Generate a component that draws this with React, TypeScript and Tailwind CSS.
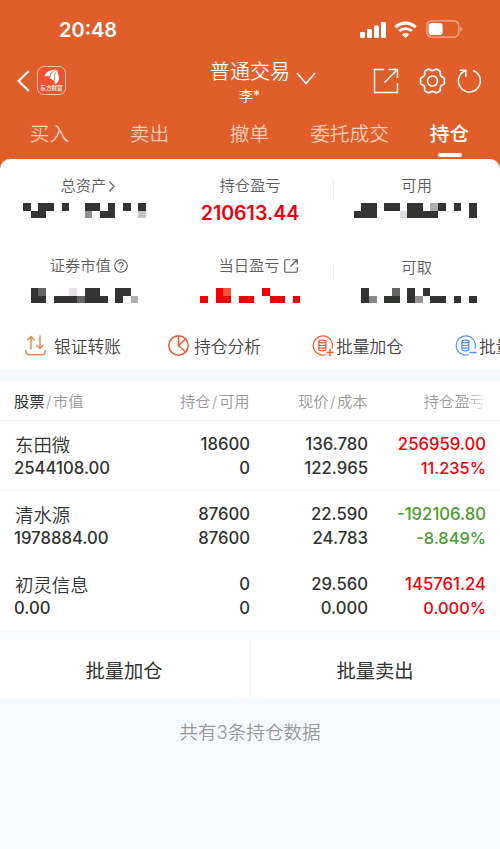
import type { ReactNode } from "react";

const K = "#313431";
const R = "#f2000a";

type Cell = [col: number, row: number, color: string, span?: number];

// Censored amounts: the page is 65 mosaic columns wide, each panel shows a third of them.
function Mosaic({ panel, cells }: { panel: number; cells: Cell[] }) {
  return (
    <svg className="block h-[15.4px] w-full" viewBox={`${(panel * 65) / 3} 0 ${65 / 3} 2`} preserveAspectRatio="none" shapeRendering="crispEdges">
      {cells.map(([c, r, fill, span = 1]) => (
        <rect key={`${c}-${r}`} x={c} y={r} width={span} height={1} fill={fill} />
      ))}
    </svg>
  );
}

const totalAssets: Cell[] = [
  [3, 0, K], [5, 0, K, 2], [8, 0, K], [11, 0, K, 2], [14, 0, K], [16, 0, K], [18, 0, K],
  [4, 1, K, 2], [11, 1, "#918f92"], [13, 1, K, 2], [18, 1, "#c5c5c5"],
];
const available: Cell[] = [
  [47, 0, K, 2], [50, 0, K, 2], [53, 0, K, 2], [56, 0, "#aeacb0"], [57, 0, K], [59, 0, K], [61, 0, K],
  [46, 1, K, 3], [52, 1, "#dddbe0"], [53, 1, K, 4], [61, 1, K],
];
const marketValue: Cell[] = [
  [4, 0, K], [5, 0, "#656266"], [9, 0, "#e6e2e7"], [11, 0, K, 2], [15, 0, K, 2],
  [4, 1, K, 2], [7, 1, K, 3], [10, 1, "#656266"], [11, 1, K, 3], [15, 1, K], [17, 1, "#b0aeb1"],
];
const todayProfit: Cell[] = [
  [28, 0, R], [29, 0, "#f25535"], [34, 0, R],
  [26, 1, R], [28, 1, R, 2], [31, 1, R, 2], [35, 1, R, 2], [38, 1, R],
];
const withdrawable: Cell[] = [
  [47, 0, K], [51, 0, "#656266"], [53, 0, K], [55, 0, K],
  [47, 1, K], [48, 1, "#888886"], [50, 1, K, 2], [53, 1, K], [54, 1, "#959195"], [56, 1, K, 2], [59, 1, K], [61, 1, K],
];

function StatusBar() {
  return (
    <div className="flex h-[60px] items-center justify-between pr-[37px] pl-[59px] text-white">
      <span className="text-[20px] leading-[60px] font-semibold">20:48</span>
      <div className="flex items-center pb-[2px]">
        <svg width="26" height="17" viewBox="0 0 26 17" fill="currentColor">
          <rect x="0" y="11" width="5" height="6" rx="1.2" />
          <rect x="7" y="8" width="5" height="9" rx="1.2" />
          <rect x="14" y="4.5" width="5" height="12.5" rx="1.2" />
          <rect x="21" y="1" width="5" height="16" rx="1.2" />
        </svg>
        <svg className="ml-[8px]" width="23" height="17" viewBox="0 0 23 17" fill="none" stroke="currentColor">
          <path d="M1.4 6.3a14.3 14.3 0 0 1 20.2 0" strokeWidth="3.1" />
          <path d="M5.2 10.1a9 9 0 0 1 12.6 0" strokeWidth="2.8" />
          <path d="M11.5 17 8 13.4a5 5 0 0 1 7 0Z" fill="currentColor" stroke="none" />
        </svg>
        <svg className="ml-[9px]" width="37" height="18" viewBox="0 0 37 18" fill="none">
          <rect x="0.8" y="0.8" width="32" height="16.4" rx="5" stroke="#f0b193" strokeWidth="1.2" />
          <rect x="2.6" y="3" width="14" height="12" rx="2.8" fill="#fff" />
          <path d="M34.5 6.4c2.3.8 2.3 4.4 0 5.2Z" fill="#f0b193" />
        </svg>
      </div>
    </div>
  );
}

function TitleBar() {
  return (
    <div className="grid h-[48px] grid-cols-[186px_130px_184px] text-white">
      <div className="flex items-center pb-[7px] pl-[17px]">
        <svg width="13" height="22" viewBox="0 0 13 22" fill="none" stroke="currentColor" strokeWidth="2.2">
          <path d="M11.8 1 1.6 11l10.2 10" />
        </svg>
        <div className="ml-[7px] flex size-[29px] flex-col items-center rounded-[7px] border border-[#f5c3ae] bg-[#f0512f]">
          <svg className="mt-[2px] shrink-0" width="16" height="16" viewBox="0 0 16 16" fill="#fff">
            <path d="M.6 8C.8 3.8 5.5.7 12.8.5 8 2.2 6 4.5 5.2 7.6 3.6 6.8 2 6.9.6 8Z" />
            <path d="M5.9 9.8C6.2 5.8 8.5 2.5 13.2.8 10.7 4 9.8 7.5 9.9 12 8.7 10.6 7.4 9.9 5.9 9.8Z" />
            <path d="M10.8 15.4C10.2 9 10.9 4.5 13.6.8c-.5 3.5 2.9 8.2.7 11.4-1 1.6-2 2.7-3.5 3.2Z" />
          </svg>
          <span className="flex h-[7px] items-center text-[5.6px] leading-[7px] font-medium whitespace-nowrap">东方财富</span>
        </div>
      </div>
      <div className="flex flex-col items-center">
        <div className="flex h-[24px] w-full items-center justify-end">
          <span className="text-[20px] leading-[24px] font-[350] whitespace-nowrap">普通交易</span>
          <svg className="mt-[12px] ml-[6px] shrink-0" width="20" height="13" viewBox="0 0 20 13" fill="none" stroke="currentColor" strokeWidth="1.5">
            <path d="m1 1 9 10.500L19 1" />
          </svg>
        </div>
        <span className="pr-[3px] text-[14px] leading-[23px]">李*</span>
      </div>
      <div className="flex items-start justify-end pt-[8px] pr-[18px]">
        <svg width="26" height="26" viewBox="0 0 26 26" fill="none" stroke="currentColor" strokeWidth="1.5">
          <path d="M11 1.500H1.500v23h23V15M15.500 1.500h9V10M24.500 1.500 11.500 14.500" />
        </svg>
        <svg className="ml-[20px]" width="27" height="26" viewBox="0 0 27 26" fill="none" stroke="currentColor" strokeWidth="1.700" strokeLinejoin="round">
          <path d="M9.200 1.200C10.600.8 11.400 2.600 13.500 2.600S16.400.8 17.800 1.200l3.200 1.900c1 1.200-.4 2.700.7 4.600 1 1.800 3 1.300 3.700 2.800v5c-.7 1.500-2.700 1-3.700 2.800-1.100 1.900.3 3.400-.7 4.600l-3.200 1.900c-1.400.4-2.200-1.400-4.300-1.400s-2.900 1.800-4.300 1.400L6 22.900c-1-1.200.4-2.700-.7-4.600-1-1.800-3-1.300-3.700-2.800v-5c.7-1.500 2.700-1 3.700-2.800C6.400 5.800 5 4.300 6 3.100Z" />
          <circle cx="13.500" cy="13" r="5" />
        </svg>
        <svg className="ml-[11px]" width="25" height="26" viewBox="0 0 25 26" fill="none" stroke="currentColor" strokeWidth="1.500">
          <path d="M16 2.500A11 11 0 1 1 8.300 2.700M2.500 2.300h6.300v6.800" />
        </svg>
      </div>
    </div>
  );
}

function Tabs() {
  return (
    <div className="grid h-[51px] grid-cols-5 text-center text-[19.700px] font-[350] text-[#f8cdb9]">
      {["买入", "卖出", "撤单", "委托成交"].map((t) => (
        <span key={t} className="pr-[1px] leading-[52px] whitespace-nowrap">{t}</span>
      ))}
      <div className="flex flex-col items-center font-medium text-white">
        <span className="h-[45px] pr-[1px] leading-[52px]">持仓</span>
        <span className="h-[4px] w-[24px] rounded-full bg-white" />
      </div>
    </div>
  );
}

function Stat({ label, icon, children }: { label: string; icon?: ReactNode; children: ReactNode }) {
  return (
    <div>
      <div className="flex h-[24px] items-center justify-center text-[15.300px] leading-[24px] font-[350] text-[#5d5d5d]">
        <span>{label}</span>
        {icon}
      </div>
      {children}
    </div>
  );
}

function Summary() {
  return (
    <section className="h-[210px] rounded-t-[10px] bg-white">
      <div className="grid h-[85px] grid-cols-3 pt-[15px]">
        <div className="[&>div>div:first-child]:pl-[9px]">
          <Stat label="总资产" icon={<svg className="ml-[3px]" width="6" height="11" viewBox="0 0 6 11" fill="none" stroke="#666" strokeWidth="1.200"><path d="m.5.500 4.500 5-4.500 5" /></svg>}>
            <div className="pt-[5px]"><Mosaic panel={0} cells={totalAssets} /></div>
          </Stat>
        </div>
        <Stat label="持仓盈亏">
          <div className="pt-[2px] text-center text-[19.600px] leading-[26px] font-semibold text-[#f2000a]">210613.44</div>
        </Stat>
        <div className="relative">
          <span className="absolute top-[7px] left-0 h-[19px] w-px bg-[#eee]" />
          <Stat label="可用">
            <div className="pt-[5px]"><Mosaic panel={2} cells={available} /></div>
          </Stat>
        </div>
      </div>
      <div className="grid h-[78px] grid-cols-3 pt-[10px]">
        <div className="[&>div>div:first-child]:pl-[11px]">
          <Stat label="证券市值" icon={<svg className="ml-[3px]" width="14" height="14" viewBox="0 0 14 14" fill="none" stroke="#555" strokeWidth="1.100"><circle cx="7" cy="7" r="6.300" /><path d="M5 5.600C5 2.900 9.200 3 9.100 5.500 9 6.900 7 7 7 8.700M7 9.700v1.200" /></svg>}>
            <div className="pt-[10px]"><Mosaic panel={0} cells={marketValue} /></div>
          </Stat>
        </div>
        <div className="[&>div>div:first-child]:pl-[16px]">
          <Stat label="当日盈亏" icon={<svg className="ml-[4px]" width="14" height="14" viewBox="0 0 14 14" fill="none" stroke="#555" strokeWidth="1.100"><path d="M6 .700H2Q.700.700.700 2v10q0 1.300 1.300 1.300h10q1.300 0 1.300-1.300V8M8.500.700h4.800v4.800M13 1 6.500 7.500" /></svg>}>
            <div className="pt-[10px]"><Mosaic panel={1} cells={todayProfit} /></div>
          </Stat>
        </div>
        <div className="relative">
          <span className="absolute top-[10px] left-0 h-[16px] w-px bg-[#eee]" />
          <div className="pt-[2px]">
            <Stat label="可取">
              <div className="pt-[8px]"><Mosaic panel={2} cells={withdrawable} /></div>
            </Stat>
          </div>
        </div>
      </div>
      <Actions />
    </section>
  );
}

function BatchIcon({ color, minus }: { color: string; minus?: boolean }) {
  return (
    <svg className="shrink-0" width="22" height="22" viewBox="0 0 22 22" fill="none" stroke={color} strokeWidth="1.200">
      <path d="M14 19.500A9.600 9.600 0 1 1 19.900 13.500" />
      <ellipse cx="10.400" cy="6.500" rx="3.500" ry="1.300" />
      <path d="M6.900 6.500v8c0 1.700 7 1.700 7 0v-8M6.900 9.200c0 1.700 7 1.700 7 0M6.900 11.900c0 1.700 7 1.700 7 0" />
      <path d={minus ? "M14.500 17.500H21.500" : "M14.500 17.500H21.500M18 14v7"} strokeWidth="1.500" />
    </svg>
  );
}

function Actions() {
  return (
    <div className="flex h-[47px] items-center overflow-hidden text-[16.800px] leading-[24px] font-[350] whitespace-nowrap text-[#444] [&>div>span]:pt-[2px]">
      <div className="flex w-[143px] shrink-0 items-center pl-[25px]">
        <svg className="shrink-0" width="21" height="21" viewBox="0 0 21 21" fill="none" stroke="#e98a50" strokeWidth="1.500" strokeLinecap="round">
          <path d="M.8 15.500c0 2.500 1 4.200 3.200 4.200h13c2.200 0 3.200-1.700 3.200-4.200M6 14V1.500M2.800 4.700 6 1.500l3.200 3.200M15 1v12.500m-3.200-3.200L15 13.500l3.200-3.200" />
        </svg>
        <span className="ml-[8px]">银证转账</span>
      </div>
      <div className="flex w-[144px] shrink-0 items-center pl-[25px]">
        <svg className="shrink-0" width="21" height="21" viewBox="0 0 21 21" fill="none" stroke="#f05a35" strokeWidth="1.500">
          <circle cx="10.500" cy="10.500" r="9.700" />
          <path d="M10.500 1v9.500l6.800-6.200M10.500 10.500l6.800 6.300" />
        </svg>
        <span className="ml-[5px]">持仓分析</span>
      </div>
      <div className="flex w-[144px] shrink-0 items-center pl-[25px]">
        <BatchIcon color="#ee5a2c" />
        <span className="ml-[2px]">批量加仓</span>
      </div>
      <div className="flex shrink-0 items-center pl-[24px]">
        <BatchIcon color="#5090ee" minus />
        <span className="ml-[2px]">批量卖出</span>
      </div>
    </div>
  );
}

const holdings = [
  { name: "东田微", value: "2544108.00", held: "18600", free: "0", price: "136.780", cost: "122.965", profit: "256959.00", rate: "11.235%", tone: "text-[#f2000a]" },
  { name: "清水源", value: "1978884.00", held: "87600", free: "87600", price: "22.590", cost: "24.783", profit: "-192106.80", rate: "-8.849%", tone: "text-[#4a9c2d]" },
  { name: "初灵信息", value: "0.00", held: "0", free: "0", price: "29.560", cost: "0.000", profit: "145761.24", rate: "0.000%", tone: "text-[#f2000a]" },
];

function Holdings() {
  return (
    <section className="mt-[12px] bg-white">
      <div className="grid h-[40px] grid-cols-[129.500px_106px_118px_117.500px] border-b border-[#f5eff0] pl-[14px] text-right text-[15.300px] leading-[41px] font-[350] whitespace-nowrap text-[#999]">
        <span className="text-left"><b className="font-normal text-[#333]">股票</b><i className="px-[1.500px] not-italic">/</i>市值</span>
        <span>持仓<i className="px-[1.500px] not-italic">/</i>可用</span>
        <span>现价<i className="px-[1.500px] not-italic">/</i>成本</span>
        <span className="bg-linear-to-r from-[#999] from-85% to-[#f4f4f4] bg-clip-text text-transparent">持仓盈亏</span>
      </div>
      {holdings.map((h, i) => (
        <div
          key={h.name}
          className={`grid h-[70px] grid-cols-[130px_106px_118px_118px] pt-[11px] pl-[14px] text-right text-[16.700px] leading-[24.500px] font-medium text-[#313431] ${i === 0 ? "border-b border-[#f5f5f5]" : ""}`}
        >
          <div className="text-left">
            <div className="h-[24px] pl-[1px] text-[18.400px] leading-[27px] font-[350]">{h.name}</div>
            <div>{h.value}</div>
          </div>
          <div><div className="h-[24px]">{h.held}</div><div>{h.free}</div></div>
          <div><div className="h-[24px]">{h.price}</div><div>{h.cost}</div></div>
          <div className={h.tone}><div className="h-[24px]">{h.profit}</div><div className="text-[16.400px]">{h.rate}</div></div>
        </div>
      ))}
    </section>
  );
}

export default function App() {
  return (
    <div className="h-[849px] w-[500px] overflow-hidden bg-[#f6faff] font-['Inter','Noto_Sans_CJK_SC',sans-serif]">
      <div className="bg-[#df5e29]">
        <StatusBar />
        <TitleBar />
        <Tabs />
        <Summary />
      </div>
      <Holdings />
      <div className="mt-[9px] grid h-[59px] grid-cols-2 gap-[2px] text-center text-[19.300px] leading-[62px] text-[#313431]">
        <span className="h-[59px] bg-white pr-[1px]">批量加仓</span>
        <span className="h-[59px] bg-white pr-[1px]">批量卖出</span>
      </div>
      <p className="pt-[18px] text-center text-[18.600px] leading-[30px] font-[350] text-[#999]">共有3条持仓数据</p>
    </div>
  );
}
